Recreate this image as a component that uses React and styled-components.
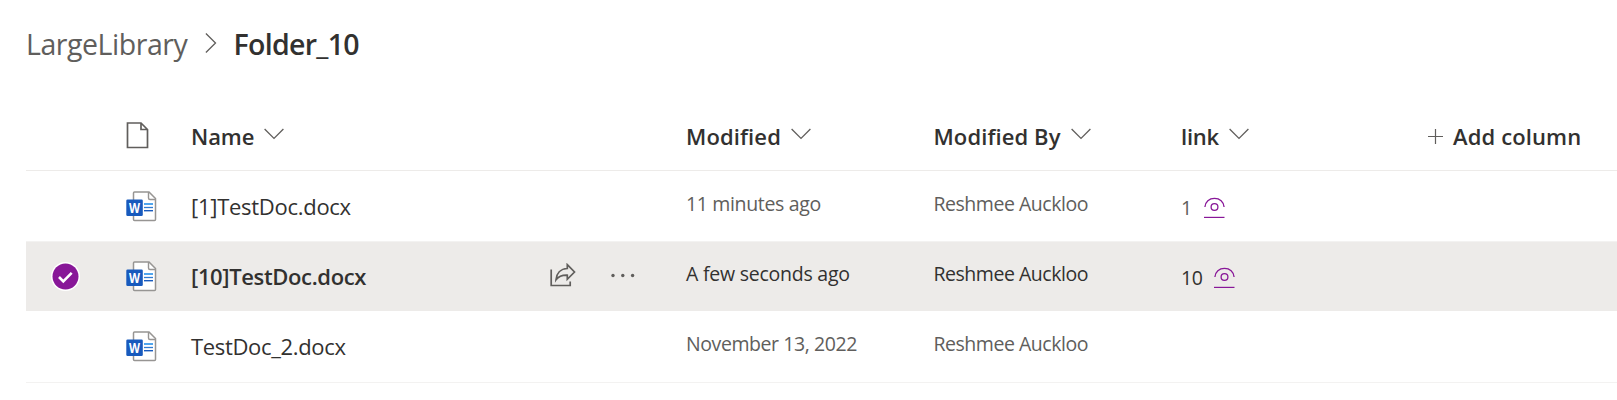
import React from "react";
import styled, { createGlobalStyle } from "styled-components";

const GlobalStyle = createGlobalStyle`
  * { box-sizing: border-box; }
  body {
    margin: 0;
    background: #fff;
    color: #323130;
    font-family: "Segoe UI", "Open Sans", "Noto Sans", sans-serif;
    overflow: hidden;
  }
`;

const Page = styled.main`
  height: 400px;
  padding-left: 26px;
  overflow: hidden;
`;

const Breadcrumb = styled.nav`
  display: flex;
  align-items: center;
  height: 88px;
  font-size: 28.5px;
  white-space: nowrap;
`;

const Crumb = styled.span`
  width: ${(p) => p.$width}px;
  padding-bottom: 1px;
  letter-spacing: ${(p) => p.$spacing || 0}px;
  color: ${(p) => (p.$current ? "#323130" : "#605e5c")};
  font-weight: ${(p) => (p.$current ? 600 : 400)};
`;

const CrumbArrow = styled.svg`
  width: 12px;
  height: 22px;
  margin: 0 16.5px 2px 0;
  flex: none;
`;

const Grid = styled.div`
  display: grid;
  grid-template-columns: 100px 65px 495px 247.5px 247.5px 247px 1fr;
  align-items: center;
`;

const HeaderRow = styled(Grid)`
  height: 83px;
  border-bottom: 1px solid #edebe9;
  font-size: 22px;
  font-weight: 600;
  padding-top: 13px;
  white-space: nowrap;
`;

const HeaderCell = styled.div`
  display: flex;
  align-items: center;
  letter-spacing: ${(p) => p.$spacing || 0}px;
`;

const Caret = styled.svg`
  width: 20px;
  height: 12px;
  margin: 0 0 3px 10px;
  flex: none;
`;

const Plus = styled.svg`
  width: 15px;
  height: 15px;
  margin: 2px 10px 0 0;
  flex: none;
`;

const Row = styled(Grid)`
  height: ${(p) => p.$height}px;
  padding-bottom: ${(p) => p.$inset || 0}px;
  border-bottom: 1px solid ${(p) => (p.$selected ? "#edebe9" : "#f3f2f1")};
  background: ${(p) => (p.$selected ? "#edebe9" : "#fff")};
  color: ${(p) => (p.$selected ? "#323130" : "#605e5c")};
  white-space: nowrap;
`;

const CheckCell = styled.div`
  display: flex;
  padding-left: 25px;
`;

const NameCell = styled.div`
  display: flex;
  align-items: center;
  color: #323130;
  font-size: 22px;
  font-weight: ${(p) => (p.$selected ? 600 : 400)};
`;

const FileName = styled.span`
  width: 359px;
  letter-spacing: ${(p) => p.$spacing || 0}px;
`;

const Meta = styled.div`
  font-size: 19.5px;
  padding-bottom: 5px;
  letter-spacing: ${(p) => p.$spacing || 0}px;
`;

const LinkCell = styled.div`
  display: flex;
  align-items: center;
  font-size: 19.5px;
  padding-top: 2px;
`;

const LinkNumber = styled.span`
  width: ${(p) => p.$width}px;
  letter-spacing: -0.4px;
`;

const Icon = styled.svg`
  display: block;
  flex: none;
  width: ${(p) => p.$w}px;
  height: ${(p) => p.$h}px;
`;

const DocIcon = styled(Icon)`
  margin-top: 1px;
`;

const ShareIcon = styled(Icon)`
  margin-bottom: 3px;
`;

const MoreIcon = styled(Icon)`
  margin: 0 0 1px 34px;
`;

const ChevronDown = () => (
  <Caret viewBox="0 0 20 12" fill="none" stroke="#605e5c" strokeWidth="1.3">
    <path d="M.6 1 10 10.4 19.4 1" />
  </Caret>
);

const PageIcon = () => (
  <Icon $w={23} $h={27} viewBox="-0.5 0 23 27" fill="none" stroke="#605e5c" strokeWidth="1.7">
    <path d="M1 1H14.5L21 7.5V25.5H1Z M14.5 1V7.5H21" />
  </Icon>
);

const WordMark = styled.text`
  font: 700 14px "Open Sans", sans-serif;
  fill: #fff;
`;

const WordIcon = () => (
  <DocIcon $w={31} $h={31} viewBox="0 0 31 31">
    <path d="M8.5 1H23L29.5 7.5V28.5Q29.5 29.5 28.5 29.5H8.5Q7.5 29.5 7.5 28.5V2Q7.5 1 8.5 1Z" fill="#fff" stroke="#979593" strokeWidth="1.5" />
    <path d="M22.5 1V7Q22.5 8.500 24 8.500H29.5" fill="none" stroke="#979593" strokeWidth="1.4" />
    <path d="M18 13H27" stroke="#50a5ee" strokeWidth="2" />
    <path d="M18 16.500H27" stroke="#2f7cd4" strokeWidth="1.3" />
    <path d="M18 19.700H27" stroke="#185abd" strokeWidth="1.4" />
    <rect x="0.3" y="8.500" width="16.500" height="16.500" rx="1.300" fill="#185abd" />
    <WordMark x="8.500" y="21.700" textAnchor="middle" textLength="11" lengthAdjust="spacingAndGlyphs">W</WordMark>
  </DocIcon>
);

const CheckIcon = () => (
  <Icon $w={29} $h={29} viewBox="0 0 29 29">
    <circle cx="14.5" cy="14.5" r="14.5" fill="#fff" />
    <circle cx="14.5" cy="14.5" r="13" fill="#881798" />
    <path d="M8 15 12.3 19.3 20.7 10.9" fill="none" stroke="#fff" strokeWidth="2.6" />
  </Icon>
);

const EyeIcon = () => (
  <Icon $w={21} $h={22} viewBox="0 0 21 22" fill="none" stroke="#881798" strokeWidth="1.3">
    <path d="M.9 11C1.3 5.7 5.2 2.4 10.5 2.4S19.7 5.7 20.1 11" />
    <circle cx="10.5" cy="11" r="3.4" />
    <path d="M0 21.4H20.5" strokeWidth="1.2" />
  </Icon>
);

const RowActions = () => (
  <>
    <ShareIcon $w={26} $h={24} viewBox="0 0 26 24" fill="none" stroke="#605e5c" strokeWidth="1.7">
      <path d="M1.2 6.5V22.5H20.2V18.5" />
      <path d="M17.3 1.7 24.5 9 17.3 16.3V12.2C12 12 8.5 13.5 6 16.8C6.5 10.5 10.5 5.8 17.3 5.5Z" />
    </ShareIcon>
    <MoreIcon $w={26} $h={5} viewBox="0 0 26 5" fill="#605e5c">
      <circle cx="3" cy="2.5" r="1.7" />
      <circle cx="12.8" cy="2.5" r="1.7" />
      <circle cx="22.6" cy="2.5" r="1.7" />
    </MoreIcon>
  </>
);

const columns = [
  { label: "Name", spacing: -0.1 },
  { label: "Modified", spacing: 0.12 },
  { label: "Modified By", spacing: 0.1 },
  { label: "link", spacing: -0.25 },
];

const files = [
  { name: "[1]TestDoc.docx", spacing: -0.28, modified: "11 minutes ago", metaSpacing: -0.35, link: "1", linkWidth: 23, height: 71 },
  { name: "[10]TestDoc.docx", spacing: -0.36, modified: "A few seconds ago", metaSpacing: -0.24, link: "10", linkWidth: 33, height: 69, selected: true },
  { name: "TestDoc_2.docx", spacing: -0.33, modified: "November 13, 2022", metaSpacing: -0.42, height: 72, inset: 1 },
];

export default function App() {
  return (
    <Page>
      <GlobalStyle />
      <Breadcrumb>
        <Crumb $width={179} $spacing={-0.45}>LargeLibrary</Crumb>
        <CrumbArrow viewBox="0 0 12 22" fill="none" stroke="#605e5c" strokeWidth="1.3">
          <path d="M.9 1.5 10.5 11 .9 20.5" />
        </CrumbArrow>
        <Crumb $width={140} $spacing={-0.7} $current>Folder_10</Crumb>
      </Breadcrumb>
      <HeaderRow>
        <span />
        <PageIcon />
        {columns.map((c) => (
          <HeaderCell key={c.label} $spacing={c.spacing}>
            {c.label}
            <ChevronDown />
          </HeaderCell>
        ))}
        <HeaderCell $spacing={0.12}>
          <Plus viewBox="0 0 15 15" stroke="#605e5c" strokeWidth="1.2">
            <path d="M7.5 0V15M0 7.5H15" />
          </Plus>
          Add column
        </HeaderCell>
      </HeaderRow>
      {files.map((f) => (
        <Row key={f.name} $height={f.height} $inset={f.inset} $selected={f.selected}>
          <CheckCell>{f.selected && <CheckIcon />}</CheckCell>
          <WordIcon />
          <NameCell $selected={f.selected}>
            <FileName $spacing={f.spacing}>{f.name}</FileName>
            {f.selected && <RowActions />}
          </NameCell>
          <Meta $spacing={f.metaSpacing}>{f.modified}</Meta>
          <Meta $spacing={-0.47}>Reshmee Auckloo</Meta>
          <LinkCell>
            {f.link && (
              <>
                <LinkNumber $width={f.linkWidth}>{f.link}</LinkNumber>
                <EyeIcon />
              </>
            )}
          </LinkCell>
        </Row>
      ))}
    </Page>
  );
}
